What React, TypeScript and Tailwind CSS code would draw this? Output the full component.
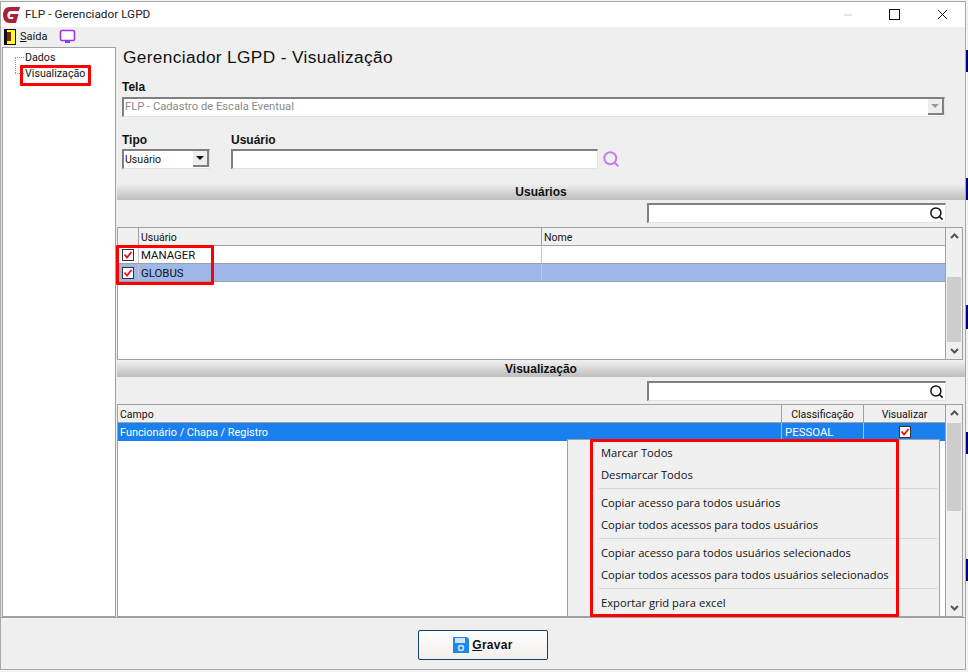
import React from 'react';
import { Minus, X, Search } from 'lucide-react';

const gridFont = "font-['Roboto',sans-serif]";

function Sunken({ className = '', children }: { className?: string; children?: React.ReactNode }) {
  return (
    <div
      className={`bg-white border border-t-2 border-l-2 border-t-[#808080] border-l-[#808080] border-r-[#e3e3e3] border-b-[#e3e3e3] ${className}`}
    >
      {children}
    </div>
  );
}

function GroupBar({ title }: { title: string }) {
  return (
    <div className="h-[16px] bg-gradient-to-b from-[#efefef] to-[#bdbdbd] flex items-center justify-center text-[12px] font-bold text-[#111]">
      {title}
    </div>
  );
}

function FilterBox({ top }: { top: 'pt-[3px]' | 'pt-[4px]' }) {
  return (
    <div className={`flex justify-end pr-[19px] h-[27px] ${top}`}>
      <Sunken className="w-[299px] h-[20px] flex items-center justify-end pr-[1px]">
        <Search size={15} strokeWidth={2.4} className="text-[#111]" />
      </Sunken>
    </div>
  );
}

function CheckMark() {
  return (
    <span className="w-[12px] h-[12px] border border-[#333] bg-white flex items-center justify-center">
      <svg width="10" height="10" viewBox="0 0 10 10">
        <path d="M1.5 4.5 L4 7.5 L8.5 2" fill="none" stroke="#ee1111" strokeWidth="1.8" />
      </svg>
    </span>
  );
}

function ScrollBar({ thumbTop, thumbH }: { thumbTop: number; thumbH: number }) {
  return (
    <div className="w-[17px] shrink-0 bg-[#f0f0f0] border-l border-[#a0a0a0] relative">
      <svg width="15" height="17" viewBox="0 0 15 17" className="absolute top-0 left-[1px]">
        <path d="M4 10 L7.5 6.5 L11 10" fill="none" stroke="#555" strokeWidth="2" />
      </svg>
      <div className="absolute left-[1px] right-[1px] bg-[#cdcdcd]" style={{ top: thumbTop, height: thumbH }} />
      <svg width="15" height="17" viewBox="0 0 15 17" className="absolute bottom-0 left-[1px]">
        <path d="M4 7 L7.5 10.5 L11 7" fill="none" stroke="#555" strokeWidth="2" />
      </svg>
    </div>
  );
}

const menuGroups = [
  ['Marcar Todos', 'Desmarcar Todos'],
  ['Copiar acesso para todos usuários', 'Copiar todos acessos para todos usuários'],
  ['Copiar acesso para todos usuários selecionados', 'Copiar todos acessos para todos usuários selecionados'],
  ['Exportar grid para excel'],
];

function ContextMenu() {
  return (
    <div className="absolute left-[567px] top-[439px] w-[373px] h-[178px] bg-[#f0f0f0] border border-[#a0a0a0] pt-[2px] pl-[31px] pr-[2px] font-['Open_Sans',sans-serif] text-[11.2px] text-[#111]">
      {menuGroups.map((group, i) => (
        <div key={i} className={i > 0 ? 'mt-[2px] border-t border-[#d4d4d4] pt-[3px]' : ''}>
          {group.map((item) => (
            <div key={item} className="h-[22px] leading-[22px] pl-[2px] whitespace-nowrap">
              {item}
            </div>
          ))}
        </div>
      ))}
    </div>
  );
}

export default function App() {
  return (
    <div className="relative w-[968px] h-[672px] overflow-hidden bg-[#f2f2f2] flex font-['Liberation_Sans',Arial,sans-serif] text-[12px] text-[#111]">
      <div className="w-[966px] h-[669px] mt-[1px] bg-[#efefef] border border-[#a8a8a8] flex flex-col">
        {/* title bar */}
        <div className="h-[25px] bg-white flex items-center shrink-0">
          <svg width="18" height="16" viewBox="0 0 18 16" className="ml-[2px] mt-[1px]">
            <path
              d="M17 0 L6.5 0 C2.5 0 0 3.5 0 8 C0 12.5 2.5 16 6.5 16 L13 16 L15.5 7 L7.5 7 L6.7 10 L10.5 10 L10 12 L7.5 12 C5 12 4.2 10 4.4 8 C4.6 5.5 6 4 8 4 L16 4 Z"
              fill="#a8223a"
            />
          </svg>
          <span className="ml-[4px] font-['Roboto',sans-serif] text-[11.8px] text-[#222]">FLP - Gerenciador LGPD</span>
          <div className="ml-auto flex items-center">
            <Minus size={12} className="text-[#c8c8c8] mr-[35px]" />
            <span className="w-[11px] h-[11px] border border-[#111] mr-[34px]" />
            <X size={17} strokeWidth={1.4} className="text-[#111] mr-[14px]" />
          </div>
        </div>
        {/* menu bar */}
        <div className="h-[20px] flex items-center shrink-0 pl-[3px]">
          <svg width="12" height="16" viewBox="0 0 12 16">
            <rect width="12" height="16" fill="#111" />
            <rect x="3" y="1" width="8" height="14" fill="#ffff22" />
            <rect x="3" y="3" width="4" height="9" fill="#7a2a10" />
          </svg>
          <span className="ml-[4px] font-['Roboto',sans-serif] text-[11px]">
            <span className="underline">S</span>aída
          </span>
          <svg width="18" height="16" viewBox="0 0 18 16" className="ml-[12px]">
            <rect x="1.5" y="1.5" width="14" height="10" rx="1.5" fill="#fff" stroke="#9a33ee" strokeWidth="1.6" />
            <rect x="6" y="12" width="5" height="2" fill="#9a33ee" />
          </svg>
        </div>
        {/* body */}
        <div className="flex-1 flex min-h-0">
          {/* tree */}
          <div className={`w-[114px] ml-[1px] shrink-0 bg-white border border-[#a0a0a0] relative pl-[22px] pt-[2px] ${gridFont} text-[10.7px]`}>
            <div className="absolute left-[12px] top-[9px] w-[1px] h-[16px] border-l border-dotted border-[#999]" />
            <div className="absolute left-[12px] top-[9px] w-[9px] border-t border-dotted border-[#999]" />
            <div className="absolute left-[12px] top-[25px] w-[9px] border-t border-dotted border-[#999]" />
            <div className="h-[16px] leading-[16px]">Dados</div>
            <div className="h-[16px] leading-[16px]">Visualização</div>
          </div>
          {/* content */}
          <div className="flex-1 min-w-0 flex flex-col pl-[1px]">
            <div className="pl-[5px] pr-[20px]">
              <h1 className="text-[17.3px] leading-[20px] ml-[1px] tracking-[0.35px] text-[#111]">Gerenciador LGPD - Visualização</h1>
              <div className="mt-[13px] font-bold leading-[14px]">Tela</div>
              <div className={`mt-[3px] h-[20px] bg-white border border-t-2 border-t-[#808080] border-l-2 border-l-[#808080] border-r-[#e3e3e3] border-b-[#e3e3e3] flex items-center pl-[1px] text-[#8a8a8a] ${gridFont} text-[11.2px] relative`}>
                FLP - Cadastro de Escala Eventual
                <span className="absolute right-0 top-0 w-[16px] h-[16px] bg-[#eeeeee] border-r-2 border-b-2 border-[#808080] flex items-center justify-center">
                  <span className="w-0 h-0 border-x-[4px] border-x-transparent border-t-[4px] border-t-[#999]" />
                </span>
              </div>
              <div className="flex mt-[16px]">
                <div className="w-[109px]">
                  <div className="font-bold leading-[14px]">Tipo</div>
                  <div className={`mt-[2px] w-[88px] h-[20px] bg-white border border-t-2 border-t-[#808080] border-l-2 border-l-[#808080] border-r-[#e3e3e3] border-b-[#e3e3e3] flex items-center pl-[1px] relative ${gridFont} text-[10.6px]`}>
                    Usuário
                    <span className="absolute right-0 top-0 w-[16px] h-[16px] bg-[#eeeeee] border-r-2 border-b-2 border-[#808080] flex items-center justify-center">
                      <span className="w-0 h-0 border-x-[4px] border-x-transparent border-t-[4px] border-t-[#111]" />
                    </span>
                  </div>
                </div>
                <div>
                  <div className="font-bold leading-[14px]">Usuário</div>
                  <div className="mt-[2px] flex items-center">
                    <Sunken className="w-[367px] h-[20px]" />
                    <Search size={18} strokeWidth={2.6} className="ml-[4px] text-[#c77bf0]" />
                  </div>
                </div>
              </div>
            </div>
            <div className="mt-[15px]">
              <GroupBar title="Usuários" />
            </div>
            <FilterBox top="pt-[3px]" />
            {/* users grid */}
            <div className={`h-[133px] bg-white border border-[#a0a0a0] mr-[2px] flex ${gridFont}`}>
              <div className="flex-1 min-w-0 flex flex-col">
                <div className="h-[18px] bg-[#f0f0f0] border-b border-[#a0a0a0] flex shrink-0 text-[10.5px]">
                  <div className="w-[21px] border-r border-[#a0a0a0]" />
                  <div className="w-[403px] border-r border-[#a0a0a0] pl-[2px] leading-[19px]">Usuário</div>
                  <div className="flex-1 pl-[2px] leading-[19px]">Nome</div>
                </div>
                {['MANAGER', 'GLOBUS'].map((name, i) => (
                  <div key={name} className={`h-[18px] border-b border-[#a0a0a0] flex shrink-0 text-[11.4px] ${i === 1 ? 'bg-[#9db8e8]' : ''}`}>
                    <div className="w-[21px] border-r border-[#c8c8c8] flex items-center justify-center"><CheckMark /></div>
                    <div className="w-[403px] border-r border-[#c8c8c8] pl-[2px] leading-[19px]">{name}</div>
                    <div className="flex-1" />
                  </div>
                ))}
              </div>
              <ScrollBar thumbTop={49} thumbH={65} />
            </div>
            <div className="mt-[1px]">
              <GroupBar title="Visualização" />
            </div>
            <FilterBox top="pt-[4px]" />
            {/* fields grid */}
            <div className={`flex-1 bg-white border border-[#a0a0a0] mr-[2px] flex min-h-0 ${gridFont}`}>
              <div className="flex-1 min-w-0 flex flex-col">
                <div className="h-[18px] bg-[#f0f0f0] border-b border-[#a0a0a0] flex shrink-0 text-[10.5px]">
                  <div className="w-[664px] border-r border-[#a0a0a0] pl-[2px] leading-[19px]">Campo</div>
                  <div className="w-[82px] border-r border-[#a0a0a0] text-center leading-[19px]">Classificação</div>
                  <div className="flex-1 text-center leading-[19px]">Visualizar</div>
                </div>
                <div className="h-[18px] bg-[#1a80f0] text-white flex shrink-0">
                  <div className="w-[664px] border-r border-[#a0c4f0] pl-[2px] leading-[19px] text-[10.9px]">Funcionário / Chapa / Registro</div>
                  <div className="w-[82px] border-r border-[#a0c4f0] pl-[3px] leading-[19px] text-[11.4px]">PESSOAL</div>
                  <div className="flex-1 flex items-center justify-center"><CheckMark /></div>
                </div>
              </div>
              <ScrollBar thumbTop={18} thumbH={88} />
            </div>
          </div>
        </div>
        {/* footer */}
        <div className="h-[52px] shrink-0 flex items-center justify-center border-t border-[#a0a0a0]">
          <button
            type="button"
            className="w-[130px] h-[30px] rounded-[2px] border border-[#12406f] bg-gradient-to-b from-white to-[#f2eeea] flex items-center justify-center font-bold text-[12px] tracking-[0.3px] mt-[2px]"
          >
            <svg width="16" height="16" viewBox="0 0 16 16" className="mr-[3px]">
              <path d="M0 0 H14 L16 2 V16 H0 Z" fill="#1e88e8" />
              <rect x="2" y="1" width="10" height="5" fill="#cfe6fa" />
              <circle cx="8" cy="11" r="2.5" fill="none" stroke="#cfe6fa" strokeWidth="1.5" />
            </svg>
            <span><span className="underline">G</span>ravar</span>
          </button>
        </div>
      </div>
      {/* background window peeking on the right */}
      <div className="flex-1 flex flex-col">
        <div className="h-[50px]" />
        <div className="h-[22px] bg-[#000080]" />
        <div className="h-[106px]" />
        <div className="h-[22px] bg-[#000080]" />
        <div className="h-[105px]" />
        <div className="h-[24px] bg-[#000080]" />
        <div className="h-[103px]" />
        <div className="h-[22px] bg-[#000080]" />
        <div className="h-[105px]" />
        <div className="h-[22px] bg-[#000080]" />
      </div>

      <ContextMenu />

      {/* red highlight boxes */}
      <div className="absolute left-[20px] top-[65px] w-[71px] h-[21px] border-[3px] border-[#ff0000] rounded-[1px]" />
      <div className="absolute left-[116px] top-[245px] w-[98px] h-[40px] border-[3px] border-[#ff0000] rounded-[1px]" />
      <div className="absolute left-[590px] top-[439px] w-[309px] h-[178px] border-[3px] border-[#ff0000] rounded-[1px]" />
    </div>
  );
}
